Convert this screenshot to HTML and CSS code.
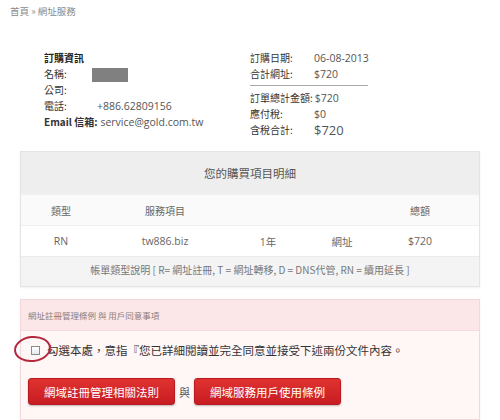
FILE: index.html
```html
<!DOCTYPE html>
<html lang="zh-Hant">
<head>
    <meta charset="UTF-8">
    <meta name="viewport" content="width=device-width, initial-scale=1.0">
    <title>網址服務</title>
    <link rel="stylesheet" href="styles.css">
</head>
<body>
    <div class="crumb">首頁 » 網址服務</div>

    <div class="order">
        <div class="buyer">
            <div class="row"><span class="title">訂購資訊</span></div>
            <div class="row"><span class="label">名稱:</span><span class="mask"></span></div>
            <div class="row"><span class="label">公司:</span></div>
            <div class="row"><span class="label">電話:</span><span class="value phone">+886.62809156</span></div>
            <div class="row"><span class="label email">Email 信箱:</span><span class="value">service@gold.com.tw</span></div>
        </div>
        <div class="summary">
            <div class="row"><span class="label wide">訂購日期:</span><span class="value">06-08-2013</span></div>
            <div class="row"><span class="label wide">合計網址:</span><span class="value">$720</span></div>
            <div class="divider"></div>
            <div class="row"><span class="label wide">訂單總計金額:</span><span class="value">$720</span></div>
            <div class="row"><span class="label wide">應付稅:</span><span class="value">$0</span></div>
            <div class="row"><span class="label wide">含稅合計:</span><span class="value total">$720</span></div>
        </div>
    </div>

    <div class="panel items">
        <div class="panel-head">您的購買項目明細</div>
        <div class="grid head-row">
            <span>類型</span>
            <span>服務項目</span>
            <span></span>
            <span></span>
            <span>總額</span>
        </div>
        <div class="grid body-row">
            <span>RN</span>
            <span>tw886.biz</span>
            <span>1年</span>
            <span>網址</span>
            <span>$720</span>
        </div>
        <div class="legend">帳單類型說明 [ R= 網址註冊, T = 網址轉移, D = DNS代管, RN = 續用延長 ]</div>
    </div>

    <div class="panel terms">
        <div class="terms-head">網址註冊管理條例 與 用戶同意事項</div>
        <div class="terms-body">
            <label class="agree">
                <span class="box"></span>
                <span class="circle"></span>
                勾選本處，意指『您已詳細閱讀並完全同意並接受下述兩份文件內容。
            </label>
            <div class="actions">
                <button class="red-btn">網域註冊管理相關法則</button>
                <span class="and">與</span>
                <button class="red-btn">網域服務用戶使用條例</button>
            </div>
        </div>
    </div>
</body>
</html>
```

FILE: styles.css
```css
body {
    margin: 0;
    background: #fff;
    color: #555;
    font-family: "Noto Sans CJK TC", "Noto Sans", sans-serif;
    font-size: 10px;
}

.crumb {
    height: 22px;
    line-height: 22px;
    padding-left: 10px;
    color: #8a8a8a;
    font-size: 9.5px;
}

/* order info */
.order {
    display: flex;
    margin-top: 28px;
    padding-left: 44px;
}

.buyer {
    width: 206px;
}

.row {
    display: flex;
    align-items: center;
    height: 16px;
    line-height: 16px;
}

.title {
    color: #222;
    font-weight: 700;
    font-size: 10px;
}

.label {
    flex-shrink: 0;
    width: 48px;
    color: #333;
    font-size: 10px;
    white-space: nowrap;
}

.label.wide {
    width: auto;
    min-width: 62px;
    margin-right: 2px;
}

.label.email {
    width: auto;
    font-weight: 700;
    margin-right: 3px;
}

.value {
    color: #555;
    font-family: "Open Sans", "Noto Sans", sans-serif;
    font-size: 10.5px;
    white-space: nowrap;
}

.value.phone {
    padding-left: 5px;
}

.value.total {
    font-size: 13px;
}

.mask {
    width: 36px;
    height: 14px;
    background: #808080;
    margin-top: 2px;
}

.divider {
    width: 118px;
    height: 1px;
    background: #a8a8a8;
    margin: 3px 0 4px;
}

/* panels */
.panel {
    margin: 13px 20px 0;
    border: 1px solid #e4e4e4;
    box-shadow: 0 1px 2px rgba(0, 0, 0, 0.06);
}

.panel-head {
    height: 42px;
    line-height: 42px;
    background: #eeeeee;
    text-align: center;
    color: #555;
    font-size: 11.5px;
}

.grid {
    display: grid;
    grid-template-columns: 80px 128px 78px 70px 86px;
    height: 30px;
    align-items: center;
    text-align: center;
    border-top: 1px solid #f0f0f0;
}

.head-row {
    background: #fafafa;
    color: #666;
    font-size: 10px;
}

.body-row {
    background: #fff;
    color: #666;
    font-family: "Open Sans", "Noto Sans CJK TC", sans-serif;
    font-size: 10.5px;
}

.legend {
    height: 29px;
    line-height: 26px;
    background: #f4f4f4;
    border-top: 1px solid #ececec;
    text-align: center;
    color: #777;
    font-size: 10px;
}

.terms {
    margin-top: 12px;
    border-color: #f1d9db;
}

.terms-head {
    height: 30px;
    line-height: 30px;
    padding-left: 7px;
    background: #fbe7e8;
    border-bottom: 1px solid #f4dcde;
    color: #8d7e80;
    font-size: 8.5px;
}

.terms-body {
    background: #fff6f6;
    padding: 11px 7px 14px;
}

.agree {
    position: relative;
    display: flex;
    align-items: center;
    height: 16px;
    color: #333;
    font-size: 11.5px;
}

.box {
    width: 7px;
    height: 7px;
    margin: 1px 7px 0 3px;
    border: 1px solid #8c8c8c;
    background: linear-gradient(#ffffff, #e4e9ef);
}

.circle {
    position: absolute;
    left: -14px;
    top: -6px;
    width: 33px;
    height: 22px;
    border: 2px solid #b3283c;
    border-radius: 50%;
    transform: rotate(-6deg);
}

.actions {
    display: flex;
    align-items: center;
    margin-top: 20px;
}

.red-btn {
    height: 27px;
    padding: 0 15px;
    border: 1px solid #b8191f;
    border-radius: 3px;
    background: linear-gradient(#e0322f, #c71c22);
    color: #fff;
    font-family: "Noto Sans CJK TC", sans-serif;
    font-size: 11.5px;
    white-space: nowrap;
    box-shadow: 0 1px 2px rgba(0, 0, 0, 0.25);
    cursor: pointer;
}

.and {
    margin: 0 4px;
    color: #555;
    font-size: 11px;
}
```
